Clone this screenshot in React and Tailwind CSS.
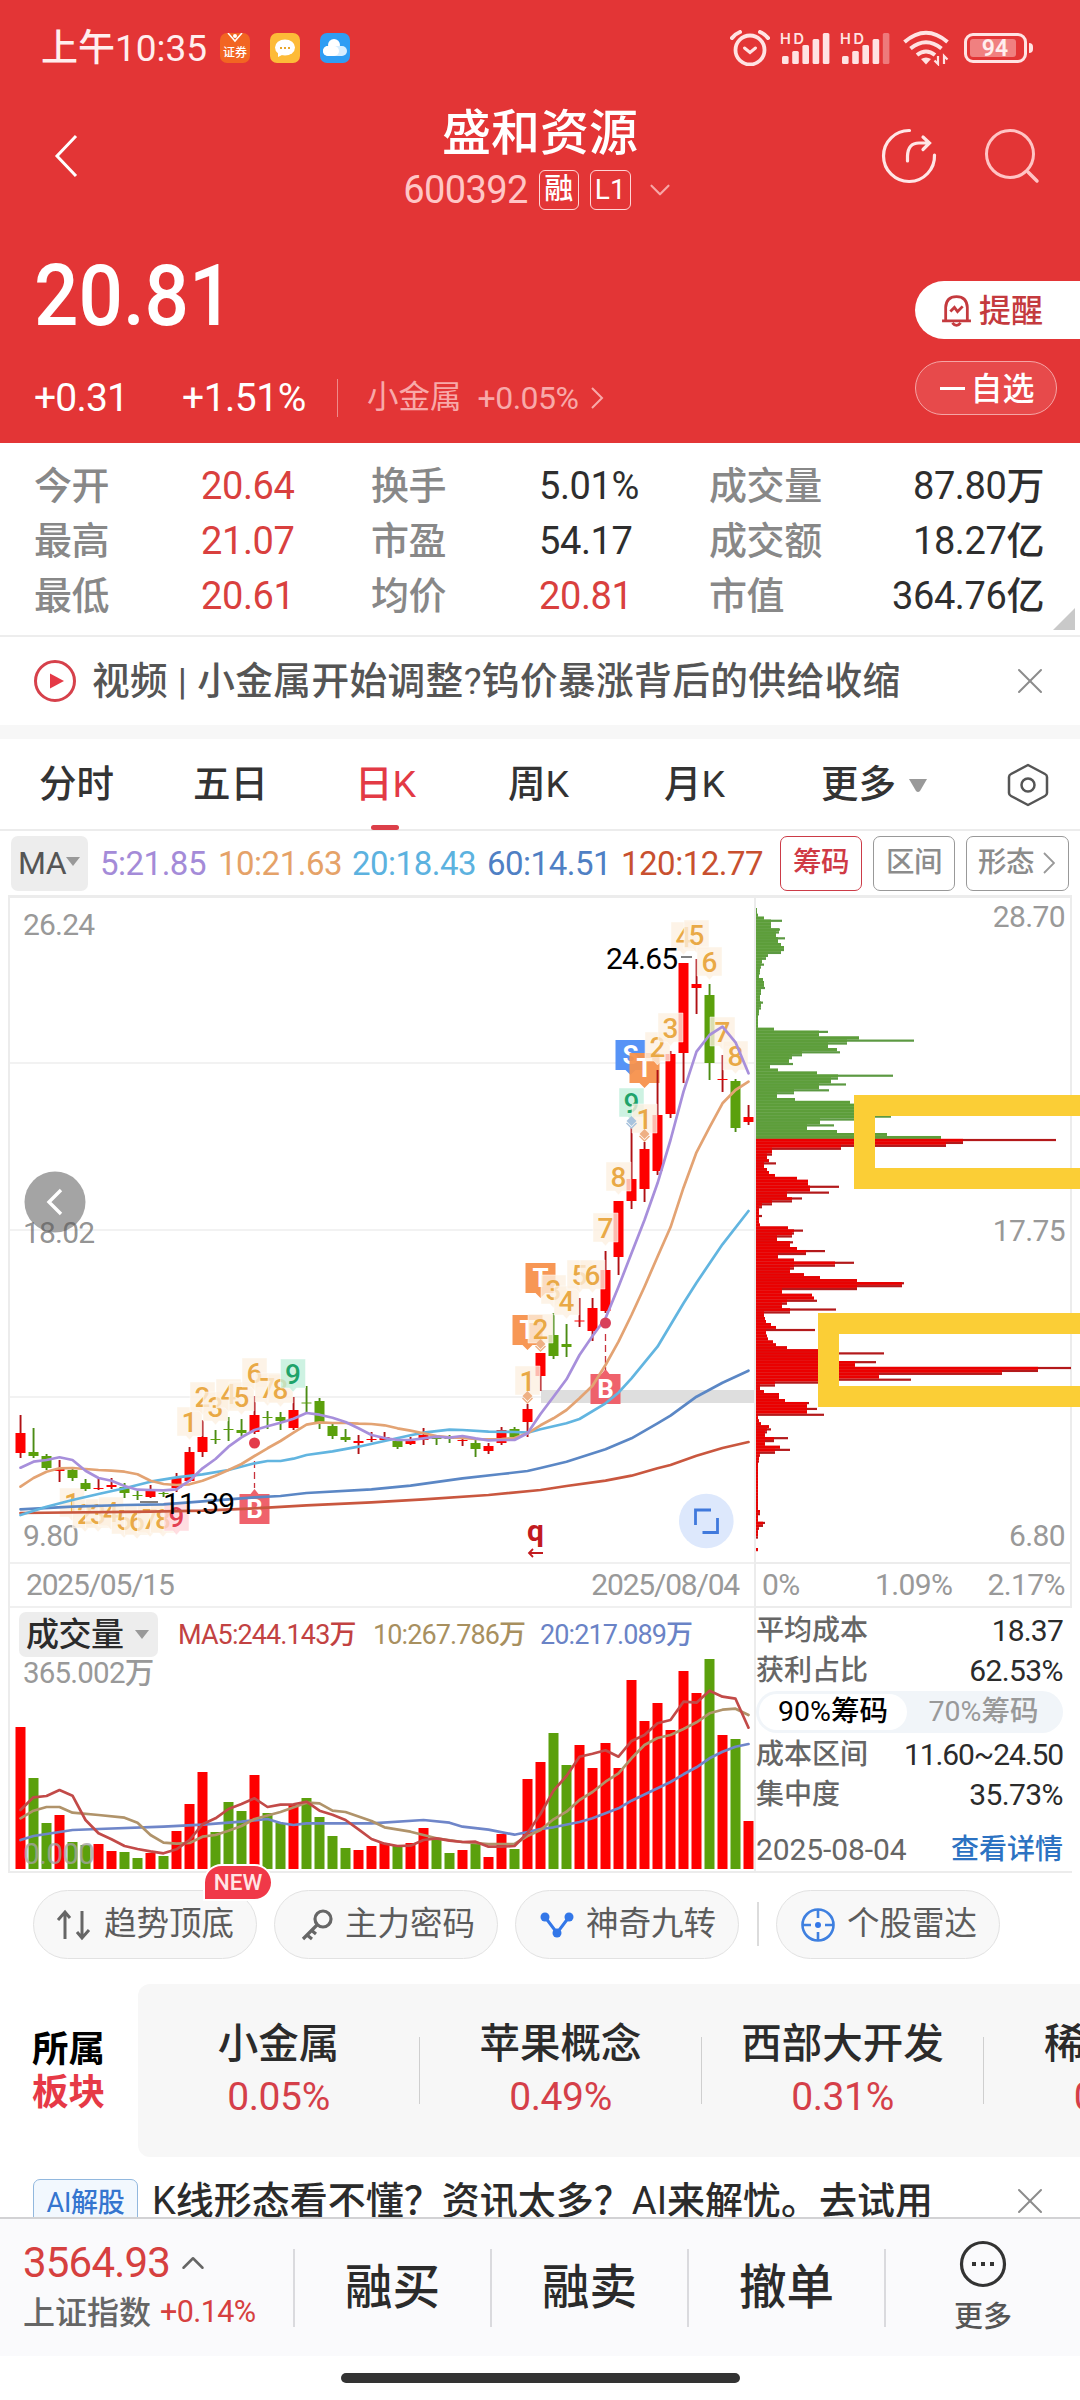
import { ChevronLeft, ChevronRight, ChevronDown, ChevronUp, X } from 'lucide-react';

const UP = '#fe0000';
const DOWN = '#5ba00c';

// [high, bodyTop, bodyBottom, low, direction]
const candles = [
  [1415, 1433, 1453, 1458, 1], [1428, 1452, 1456, 1458, 0], [1454, 1456, 1468, 1470, 0], [1460, 1469, 1471, 1482, 1],
  [1467, 1470, 1478, 1481, 0], [1479, 1483, 1489, 1491, 0], [1477, 1488, 1489, 1490, 1], [1478, 1485, 1487, 1489, 1],
  [1483, 1487, 1493, 1498, 0], [1491, 1495, 1496, 1500, 0], [1485, 1491, 1497, 1498, 1], [1492, 1493, 1494, 1497, 0],
  [1473, 1478, 1488, 1492, 1], [1447, 1452, 1481, 1482, 1], [1420, 1437, 1452, 1457, 1], [1430, 1439, 1440, 1444, 0],
  [1417, 1429, 1430, 1441, 0], [1419, 1430, 1433, 1436, 0], [1396, 1415, 1432, 1434, 1], [1411, 1417, 1418, 1429, 0],
  [1412, 1417, 1421, 1430, 0], [1397, 1410, 1428, 1430, 1], [1386, 1402.5, 1403.5, 1412, 0], [1398, 1401, 1422, 1429, 0],
  [1423, 1426, 1436, 1439, 0], [1429, 1437, 1440, 1442, 0], [1435, 1441, 1443, 1454, 1], [1432, 1439, 1440, 1442, 1],
  [1432, 1437, 1440, 1441, 1], [1438, 1441, 1447, 1449, 0], [1437, 1441, 1444, 1445, 1], [1428, 1435, 1440, 1445, 1],
  [1435, 1438, 1439, 1445, 0], [1435, 1438, 1439, 1443, 0], [1437, 1440, 1441, 1446, 1], [1440, 1443, 1449, 1457, 0],
  [1443, 1446, 1451, 1454, 1], [1427, 1430, 1443, 1445, 1], [1427, 1429, 1437, 1438, 0], [1404, 1409, 1422, 1437, 1],
  [1353, 1353, 1376, 1391, 1], [1313, 1335, 1356, 1359, 0], [1324, 1344, 1347, 1357, 0], [1298, 1320.5, 1321.5, 1327, 1],
  [1298, 1308, 1331, 1341, 1], [1251, 1270, 1311, 1313, 1], [1201, 1201, 1257, 1275, 1], [1128, 1179, 1201, 1209, 1],
  [1142, 1149, 1189, 1202, 1], [1070, 1115, 1171, 1175, 1], [1051, 1054, 1114, 1118, 1], [963, 963, 1053, 1083, 1],
  [959, 984, 988, 1014, 1], [984, 995, 1063, 1080, 0], [1055, 1079, 1080, 1092, 1], [1079, 1081, 1128, 1132, 0],
  [1105, 1117, 1122, 1125, 1],
];

const volumes = [
  142, 91, 46, 54, 27, 24, 25, 18, 17, 11, 16, 13, 38, 65, 97, 37, 67, 58, 94, 56, 46, 64, 71, 52, 33, 21, 19, 23, 26,
  24, 26, 41, 31, 16, 19, 25, 12, 35, 20, 90, 107, 136, 104, 124, 101, 126, 101, 189, 148, 166, 139, 198, 176, 210, 134,
  130, 48,
];

const ma5 = [
  1467.7, 1461.7, 1460, 1457.3, 1460, 1470.7, 1478, 1480.7, 1486, 1489.7, 1490, 1490.3, 1489.3, 1480.7, 1468.3, 1459,
  1446.7, 1437.3, 1430, 1426.3, 1422.7, 1418.7, 1413, 1414.7, 1417.7, 1422, 1428.3, 1435, 1438, 1440, 1440, 1438.3,
  1436.7, 1437.7, 1436, 1438.3, 1440.3, 1440, 1440, 1433.3, 1414, 1396.7, 1379.3, 1355, 1336, 1318.3, 1286.7, 1253.3,
  1220, 1183.3, 1140, 1091.7, 1051.7, 1035, 1026.7, 1042.3, 1073.3,
].map((y, i) => [i, y]);

const ma10 = [
  1486.7, 1478, 1471.7, 1468.3, 1468, 1469, 1470, 1470.7, 1471.7, 1474.3, 1480.7, 1484, 1485, 1484.3, 1480.7, 1475.7,
  1470, 1464, 1456, 1448.3, 1441, 1432.7, 1424.7, 1422.3, 1423, 1423, 1423.7, 1424, 1425.3, 1428.3, 1430.7, 1433.3,
  1436, 1437.3, 1438, 1439, 1439.3, 1439, 1438, 1433.3, 1425.3, 1418.3, 1410, 1398.3, 1385.7, 1365, 1341.7, 1315,
  1286.7, 1256.7, 1227.3, 1187.7, 1152.3, 1127.3, 1103.3, 1090, 1081.7,
].map((y, i) => [i, y]);

const ma20 = [
  [0, 1515], [2, 1506.7], [4, 1500], [6, 1494], [8, 1488.3], [10, 1481.7], [12, 1477.3], [14, 1474.3], [16, 1470],
  [18, 1463.3], [19, 1461], [20, 1461], [21, 1458.7], [22, 1455], [24, 1451.3], [26, 1446.7], [28, 1441], [30, 1435.3],
  [31, 1432.7], [33, 1429.7], [34, 1430], [36, 1431.7], [38, 1432], [39, 1432.7], [40, 1429.3], [42, 1423.3],
  [43, 1419], [45, 1403.3], [46, 1392.7], [47, 1378.3], [49, 1346.7], [50, 1325], [51, 1303.3], [52, 1282.7],
  [54, 1244.3], [56, 1211],
];

const ma60 = [
  [0, 1509.3], [4, 1506.7], [8, 1505], [11, 1504.3], [14, 1501.3], [18, 1497.3], [20, 1496], [22, 1493], [27, 1489.3],
  [30, 1485.7], [34, 1478.3], [37, 1474], [39, 1471], [40, 1468], [42, 1461.7], [45, 1449.3], [47, 1438.3],
  [49, 1423.3], [50, 1415.7], [52, 1396.7], [54, 1382.7], [56, 1370.7],
];

const ma120 = [
  [0, 1513], [10, 1511.7], [14, 1510.7], [18, 1508.3], [22, 1505.3], [27, 1502.3], [31, 1499.3], [36, 1495],
  [40, 1490], [42, 1486], [45, 1480.7], [47, 1475.7], [49, 1468.3], [50, 1465], [52, 1455.7], [54, 1448], [56, 1442],
];

const vol5 = [
  1810, 1797.3, 1796, 1790, 1795.7, 1820, 1833.3, 1839.3, 1846, 1849, 1851.3, 1853.3, 1849.3, 1840, 1824.3, 1818.3,
  1809, 1804, 1798.3, 1807, 1804.7, 1804.3, 1801.7, 1810.7, 1814.7, 1820, 1829.3, 1839, 1843.7, 1846, 1845.7, 1840,
  1838.3, 1840.7, 1842, 1841.7, 1846.7, 1846.7, 1846, 1833, 1814, 1790.7, 1776, 1756.7, 1753.7, 1750.3, 1756.7, 1741,
  1735, 1723.3, 1720, 1701.7, 1702.7, 1690.7, 1696.7, 1698.7, 1727.7,
].map((y, i) => [i, y]);

const vol10 = [
  [0, 1818.3], [1, 1810.7], [2, 1807], [3, 1807], [4, 1812.7], [6, 1815], [8, 1817.7], [9, 1822.7], [10, 1835],
  [11, 1842.7], [12, 1843.7], [13, 1843], [14, 1836.7], [15, 1835], [16, 1830.7], [17, 1826], [18, 1819], [20, 1812],
  [22, 1802.7], [23, 1803.3], [24, 1810.7], [25, 1812], [27, 1821], [28, 1827.3], [30, 1831.7], [32, 1838.3],
  [34, 1842], [36, 1844], [38, 1844], [39, 1836], [40, 1830], [41, 1819.3], [42, 1811.7], [43, 1800], [44, 1792],
  [45, 1781.7], [46, 1773.3], [47, 1758.3], [48, 1745], [49, 1738], [50, 1735], [51, 1729], [52, 1722.3], [53, 1713.3],
  [54, 1709.7], [55, 1708.7], [56, 1715],
];

const vol20 = [
  [0, 1840], [1, 1836], [4, 1830], [6, 1829], [11, 1826.7], [14, 1824.7], [17, 1821.7], [19, 1819], [20, 1823],
  [21, 1825], [22, 1823.3], [27, 1823.3], [31, 1820], [33, 1822.7], [34, 1826.7], [36, 1829.7], [38, 1834.7],
  [39, 1832], [40, 1829], [41, 1827.3], [43, 1822], [44, 1818.3], [46, 1808.3], [47, 1800.7], [49, 1788.3],
  [50, 1782], [51, 1774.3], [52, 1767.3], [53, 1758.3], [54, 1751.7], [55, 1746.7], [56, 1744],
];

// chip distribution, one length per price step, top to bottom
const chips = [
  1, 1, 2, 8, 26, 15, 15, 24, 23, 20, 29, 22, 25, 28, 28, 25, 12, 10, 6, 8, 5, 4, 4, 3, 7, 8, 8, 9, 5, 5, 4, 4, 7, 5, 5,
  3, 3, 2, 2, 2, 2, 18, 72, 63, 103, 158, 91, 72, 81, 84, 46, 36, 33, 37, 14, 22, 61, 137, 82, 75, 90, 63, 73, 38, 21,
  39, 94, 110, 110, 115, 110, 135, 98, 64, 78, 51, 81, 131, 185, 300, 207, 190, 85, 16, 16, 11, 13, 20, 8, 11, 13, 19,
  41, 52, 52, 83, 54, 73, 31, 46, 36, 16, 6, 3, 3, 6, 3, 3, 4, 32, 47, 38, 36, 21, 37, 34, 41, 69, 50, 22, 38, 98, 79,
  38, 34, 48, 64, 101, 148, 146, 101, 26, 56, 58, 61, 31, 26, 80, 34, 8, 9, 10, 15, 20, 59, 10, 11, 12, 17, 20, 31, 65,
  128, 75, 80, 120, 99, 315, 282, 246, 123, 155, 65, 19, 4, 8, 23, 23, 29, 53, 51, 61, 51, 68, 2, 3, 5, 13, 15, 11, 9,
  32, 18, 9, 24, 34, 19, 4, 3, 3, 2, 2, 2, 2, 2, 2, 2, 2, 2, 2, 2, 2, 2, 2, 2, 2, 4, 4, 2, 2, 9, 7, 3, 2, 2, 2, 0, 0, 0, 2,
];
const FIRST_RED_CHIP = 79;

const turns = [
  [72, 1503, '1'], [85, 1514, '2'], [98, 1514, '3'], [111, 1512, '4'], [124, 1520, '5'], [137, 1521, '6'],
  [150, 1519, '7'], [163, 1519, '8'],
  [189.5, 1422, '1'], [202.5, 1397, '2'], [215.5, 1407, '3'], [228.5, 1394, '4'], [241.5, 1397, '5'],
  [254.5, 1373, '6'], [267.5, 1388, '7'], [280.5, 1389, '8'],
  [527.5, 1381, '1'], [540.5, 1329, '2'], [553.5, 1290, '3'], [566.5, 1301, '4'], [579.5, 1275, '5'],
  [592.5, 1275, '6'], [605.5, 1228, '7'], [618.5, 1177, '8'],
  [644.5, 1119, '1'], [657.5, 1047, '2'], [670.5, 1028, '3'], [683.5, 937, '4'], [696.5, 935, '5'],
  [709.5, 962, '6'], [722.5, 1032, '7'], [735.5, 1056, '8'],
];

const stats = [
  ['今开', '20.64', true, '换手', '5.01%', false, '成交量', '87.80万'],
  ['最高', '21.07', true, '市盈', '54.17', false, '成交额', '18.27亿'],
  ['最低', '20.61', true, '均价', '20.81', true, '市值', '364.76亿'],
];

const sectors = [
  ['小金属', '0.05%'],
  ['苹果概念', '0.49%'],
  ['西部大开发', '0.31%'],
  ['稀土永磁', '0.28%'],
];

const barX = (i) => 20.5 + i * 13;
const toPoints = (line) => line.map(([i, y]) => `${barX(i)},${y}`).join(' ');

function Line({ data, color, width = 2.7 }) {
  return <polyline points={toPoints(data)} fill="none" stroke={color} strokeWidth={width} strokeLinejoin="round" strokeLinecap="round" />;
}

function Turn({ x, y, n, bg = '#fdf0e0', color = '#e8a53c' }) {
  return (
    <g>
      <path
        d={`M${x - 12.5} ${y - 15}h25v29h-9l-3.5 4l-3.5-4h-9z`}
        fill={bg}
        fillOpacity="0.78"
        stroke="#fff"
        strokeOpacity="0.6"
        strokeWidth="0.8"
      />
      <text x={x} y={y + 10} fontSize="28" fontWeight="500" fill={color} fillOpacity="0.95" textAnchor="middle">{n}</text>
    </g>
  );
}

function Flag({ x, y, label, color, up }) {
  const d = up
    ? `M${x - 15} ${y - 15}h11l4-5l4 5h11v30h-30z`
    : `M${x - 15} ${y - 15}h30v30h-10l-5 5l-5-5h-10z`;
  return (
    <g>
      <path d={d} fill={color} fillOpacity="0.95" />
      <text x={x} y={y + 9} fontSize="26" fontWeight="700" fill="#fff" textAnchor="middle">{label}</text>
    </g>
  );
}

function Diamond({ x, y, color }) {
  return (
    <g>
      <path d={`M${x - 5} ${y}l5-5l5 5l-5 5z`} fill={color} />
      <path d={`M${x - 5} ${y + 2}l5 5l5-5`} fill="none" stroke={color} strokeWidth="1.5" />
    </g>
  );
}

function KLineChart() {
  return (
    <svg viewBox="10 898 744 664" className="block h-[664px] w-[744px] overflow-visible">
      <g stroke="#f2f2f2" strokeWidth="2">
        <path d="M10 1063H754M10 1230H754M10 1397H754" />
      </g>
      <circle cx="55" cy="1202" r="30.5" fill="#a4a4a4" />
      <path d="M61 1190L49 1202L61 1214" fill="none" stroke="#fff" strokeWidth="3.4" />
      <rect x="541" y="1390" width="213" height="13" fill="#dedede" />
      <g fontSize="30" fill="#999" letterSpacing="-0.8">
        <text x="23" y="935">26.24</text>
        <text x="23" y="1243" fill="#555" fillOpacity="0.65">18.02</text>
        <text x="23" y="1546">9.80</text>
      </g>

      {turns.slice(0, 8).map(([x, y, n]) => <Turn key={`${x}-${y}`} x={x} y={y} n={n} />)}
      <Turn x={176.5} y={1517} n="9" bg="#ffd3d8" color="#e2364a" />

      <Flag x={254.5} y={1509} label="B" color="#ee5a64" up />
      <Flag x={605.5} y={1389} label="B" color="#ee5a64" up />
      <g stroke="#c8323c" strokeWidth="1.3" strokeDasharray="7 4">
        <path d="M254.5 1461V1488M605.5 1334V1370" />
      </g>
      <Flag x={630.5} y={1055} label="S" color="#4d8df6" />
      <Flag x={644.5} y={1068} label="T" color="#f7914c" />
      <Flag x={540.5} y={1278} label="T" color="#f7914c" />
      <Flag x={527.5} y={1330} label="T" color="#f7914c" />

      {candles.map(([high, top, bottom, low, up], i) => (
        <g key={i} fill={up ? UP : DOWN}>
          <rect x={barX(i) - 0.9} y={high} width="1.9" height={low - high} fill={up ? '#b01014' : '#4c8c14'} />
          <rect x={barX(i) - 5} y={top} width="10" height={bottom - top} />
        </g>
      ))}

      {turns.slice(8, 16).map(([x, y, n]) => <Turn key={`${x}-${y}`} x={x} y={y} n={n} />)}
      <Turn x={293} y={1374} n="9" bg="#bfeeda" color="#149e63" />
      {turns.slice(16, 24).map(([x, y, n]) => <Turn key={`${x}-${y}`} x={x} y={y} n={n} />)}
      <Turn x={631.5} y={1103} n="9" bg="#bfeeda" color="#149e63" />
      {turns.slice(24).map(([x, y, n]) => <Turn key={`${x}-${y}`} x={x} y={y} n={n} />)}
      <Diamond x={527.5} y={1396} color="#eeb083" />
      <Diamond x={540.5} y={1344} color="#eeb083" />
      <Diamond x={644.5} y={1134} color="#eeb083" />
      <Diamond x={631.5} y={1121} color="#a9c3dd" />

      <Line data={ma120} color="#c9573f" />
      <Line data={ma60} color="#5b87c5" />
      <Line data={ma20} color="#62b5e0" />
      <Line data={ma10} color="#e3a373" />
      <Line data={ma5} color="#a78fdb" />
      <circle cx="254.5" cy="1443" r="5.5" fill="#e33b4a" />
      <circle cx="605.5" cy="1323" r="5.5" fill="#d8405a" />

      <path d="M140 1502H158M681 957H692" stroke="#555" strokeWidth="1.6" />
      <g fontSize="30" fill="#000" letterSpacing="-0.8">
        <text x="163" y="1514">11.39</text>
        <text x="606" y="969">24.65</text>
      </g>
      <text x="535.5" y="1541" fontSize="30" fontWeight="700" fill="#c21b1f" textAnchor="middle">q</text>
      <path d="M543 1553H529M533 1549L529 1553L533 1557" fill="none" stroke="#c21b1f" strokeWidth="1.8" />

      <circle cx="706.3" cy="1521" r="27.3" fill="#dde8fc" />
      <path d="M695.5 1525V1510H711M717.5 1518V1532.5H702.5" fill="none" stroke="#4079dc" strokeWidth="2.8" />
    </svg>
  );
}

function VolumeChart() {
  return (
    <svg viewBox="10 1659 744 211" className="block h-[211px] w-[744px] overflow-visible">
      <text x="23" y="1683" fontSize="29.5" fill="#999" letterSpacing="-0.8">365.002万</text>
      {volumes.map((h, i) => (
        <rect key={i} x={barX(i) - 5} y={1869 - h} width="10" height={h} fill={candles[i][4] ? UP : DOWN} />
      ))}
      <text x="23" y="1864" fontSize="30" fill="#a3a3a3" fillOpacity="0.8" letterSpacing="-0.8">0.000</text>
      <Line data={vol20} color="#6f86c9" />
      <Line data={vol10} color="#b0936a" />
      <Line data={vol5} color="#c24a48" />
    </svg>
  );
}

function ChipChart() {
  return (
    <svg viewBox="756 898 314 664" className="block h-[664px] w-[314px] overflow-visible">
      {chips.map((len, i) => {
        const y = 908 + i * 2.923;
        const red = i >= FIRST_RED_CHIP;
        const inner = Math.min(len, chips[i + 1] ?? len);
        return (
          <g key={i}>
            <rect x="756" y={y} width={inner} height="3.1" fill={red ? '#f52222' : '#73ad53'} />
            <rect x="756" y={y} width={len} height="2.2" fill={red ? '#b3191b' : '#5c9942'} />
            <rect x="756" y={y} width={inner} height="2.3" fill={red ? '#ea0000' : '#5d9e3a'} />
          </g>
        );
      })}
      <g fontSize="30" fill="#999" textAnchor="end" letterSpacing="-0.6">
        <text x="1065" y="927">28.70</text>
        <text x="1065" y="1241">17.75</text>
        <text x="1065" y="1546">6.80</text>
      </g>
    </svg>
  );
}

function SignalBars({ faded }) {
  return (
    <svg viewBox="0 0 51 34" className="h-[34px] w-[51px] overflow-visible">
      <text x="0" y="12.5" fontSize="14.5" fontWeight="600" fill="#ffe3e3" textLength="24" fontFamily="Inter">HD</text>
      {[8, 13, 19, 25, 31].map((h, i) => (
        <rect key={h} x={2 + i * 10.2} y={33 - h} width="6.6" height={h} rx="1.5" fill="#ffe3e3" fillOpacity={faded && i === 4 ? 0.4 : 1} />
      ))}
    </svg>
  );
}

function StatusBar() {
  return (
    <div className="flex h-[96px] items-center pl-[41px] text-[#ffeeee]">
      <span className="w-[179px] text-[37px] leading-none whitespace-nowrap">上午10:35</span>
      <svg viewBox="0 0 30 30" className="size-[30px]">
        <rect width="30" height="30" rx="7" fill="#f26522" />
        <path d="M8 0L15 8L22 0" fill="none" stroke="#fff" strokeWidth="1.5" />
        <circle cx="15" cy="3" r="2" fill="#fff" />
        <text x="15" y="24" fontSize="12" fill="#fff" textAnchor="middle">证券</text>
      </svg>
      <svg viewBox="0 0 30 30" className="ml-5 size-[30px]">
        <rect width="30" height="30" rx="7" fill="#fdbb38" />
        <ellipse cx="15" cy="14.5" rx="10" ry="8" fill="#fff" />
        <path d="M8 18v6l6-3z" fill="#fff" />
        <path d="M10 15h2M14 15h2M18 15h2" stroke="#e8a52c" strokeWidth="2" />
      </svg>
      <svg viewBox="0 0 30 30" className="ml-5 size-[30px]">
        <rect width="30" height="30" rx="7" fill="#2f9df4" />
        <circle cx="14" cy="12" r="6" fill="#fff" />
        <rect x="3" y="13" width="24" height="10" rx="5" fill="#d8eeff" />
        <rect x="3" y="13" width="16" height="10" rx="5" fill="#fff" />
      </svg>
      <svg viewBox="0 0 40 36" className="ml-[380px] h-[36px] w-[40px]" fill="none" stroke="#ffe3e3" strokeLinecap="round">
        <circle cx="20" cy="20" r="14.5" strokeWidth="3.8" />
        <path d="M14.5 18L20 22.5L25.5 18" strokeWidth="3" />
        <path d="M2 8Q5 4 10 2M38 8Q35 4 30 2" strokeWidth="4" />
      </svg>
      <div className="ml-[10px]"><SignalBars /></div>
      <div className="ml-[9px]"><SignalBars faded /></div>
      <svg viewBox="0 0 47 36" className="ml-[12px] h-[36px] w-[47px]" fill="none" stroke="#ffe3e3" strokeWidth="4">
        <path d="M1.5 12Q23 -6.5 44.5 12M7.5 18.5Q23 6 38.5 18.5M14 25Q23 18 32 25" />
        <path d="M18 29Q23 26 28 29L23 34.5z" fill="#ffe3e3" stroke="none" />
        <path d="M35 26v8l-3.5-3.5M41 34v-8l3.5 3.5" strokeWidth="2.2" />
      </svg>
      <div className="ml-[14px] flex h-[30px] w-[63px] rounded-[9px] border-[3px] border-[#ffe3e3] p-[3px]">
        <div className="flex w-[46px] items-center justify-center rounded-[3px] bg-[#f08080]">
          <span className="pl-[4px] text-[23px] leading-none font-semibold">94</span>
        </div>
      </div>
      <div className="ml-[2px] h-[10px] w-[4px] rounded-r bg-[#ffe3e3]" />
    </div>
  );
}

function Header() {
  return (
    <header className="h-[443px] bg-[#e33536] text-white">
      <StatusBar />
      <div className="flex h-[144px]">
        <svg viewBox="0 0 24 44" className="mt-[38px] ml-[54px] h-[44px] w-[24px]">
          <path d="M22 2L3 22L22 42" fill="none" stroke="#fff" strokeWidth="3" />
        </svg>
        <div className="ml-[322px] flex w-[280px] flex-col items-center">
          <h1 className="mt-[13px] text-[49px] leading-[50px] font-medium">盛和资源</h1>
          <div className="mt-[10px] flex items-center">
            <span className="pt-[2px] text-[38px] leading-[39px] font-normal tracking-[-0.6px] text-[#ffc6c6]">600392</span>
            <span className="ml-[11px] flex h-[40px] w-[40px] items-center justify-center rounded-[6px] border border-[#ffd6d6] text-[29px] leading-none">融</span>
            <span className="ml-[11px] flex h-[40px] w-[41px] items-center justify-center rounded-[6px] border border-[#ffd6d6] text-[28px] leading-none">L1</span>
            <ChevronDown className="ml-[12px] size-[34px] text-[#f7a6a6]" strokeWidth={1.5} />
          </div>
        </div>
        <svg viewBox="0 0 56 56" className="mt-[32px] ml-[201px] size-[56px]" fill="none" stroke="#ffe6e6" strokeWidth="3.2" strokeLinecap="round">
          <path d="M28.5 2.5A25.5 25.5 0 1 0 53.5 27" />
          <path d="M26.5 33V28Q27 15 38 15H48M42 9L48.5 15L42 21.5" />
        </svg>
        <svg viewBox="0 0 56 56" className="mt-[32px] ml-[47px] size-[56px]" fill="none" stroke="#ffc4c4" strokeWidth="3">
          <circle cx="26" cy="26" r="23.5" />
          <path d="M44 44L53 53" strokeWidth="3.5" strokeLinecap="round" />
        </svg>
      </div>
      <div className="flex h-[203px]">
        <div className="flex-1 pl-[34px]">
          <div className="mt-[11px] h-[90px] w-[200px] origin-left scale-x-[0.92] text-[85px] leading-[90px] font-medium">20.81</div>
          <div className="mt-[37px] flex h-[40px] items-center whitespace-nowrap">
            <span className="w-[148px] text-[39px] leading-none tracking-[-0.8px]">+0.31</span>
            <span className="w-[155px] text-[39px] leading-none tracking-[-0.5px]">+1.51%</span>
            <span className="h-[38px] w-px bg-[#ef8a8a]" />
            <span className="ml-[29px] text-[31.5px] leading-none font-normal text-[#f8a9a9]">小金属</span>
            <span className="ml-[16px] text-[32px] leading-none font-normal tracking-[-0.5px] text-[#f8a9a9]">+0.05%</span>
            <svg viewBox="0 0 14 24" className="ml-[11px] h-[24px] w-[14px]"><path d="M2 2L12 12L2 22" fill="none" stroke="#f8a9a9" strokeWidth="2" /></svg>
          </div>
        </div>
        <div className="flex w-[165px] flex-col">
          <div className="mt-[41px] flex h-[58px] items-center rounded-l-full bg-white pl-[25px] text-[#c43a3e]">
            <svg viewBox="0 0 32 32" className="size-[33px]" fill="none" stroke="#c43a3e" strokeWidth="2.7">
              <path d="M2 26H30M5.5 26V13Q6 2.5 16 2.5T26.5 13V26" />
              <path d="M10 17L14 13L17 17L22 12M12 28Q16 33 20 28" />
            </svg>
            <span className="mt-[2px] ml-[6px] text-[32px] leading-none">提醒</span>
          </div>
          <div className="mt-[22px] flex h-[54px] w-[142px] items-center justify-center rounded-full border border-[#f5a5a5] bg-[#e74a4b] pt-px pl-[3px] text-[32px] leading-none">
            <span className="mr-[5px] h-[3px] w-[25px] bg-white" />
            自选
          </div>
        </div>
      </div>
    </header>
  );
}

function Stats() {
  return (
    <section className="flex h-[194px] flex-col border-b-2 border-[#ededed] pt-[15px]">
      {stats.map(([a, av, aUp, b, bv, bUp, c, cv]) => (
        <div key={a} className="flex h-[55px] items-center pl-[34px] text-[38px] leading-none tracking-[-0.4px] whitespace-nowrap text-[#2e2e2e]">
          <span className="w-[167px] text-[#888]">{a}</span>
          <span className={aUp ? 'w-[170px] text-[#d9403e]' : 'w-[170px]'}>{av}</span>
          <span className="w-[168px] text-[#888]">{b}</span>
          <span className={bUp ? 'w-[170px] text-[#d9403e]' : 'w-[170px]'}>{bv}</span>
          <span className="text-[#888]">{c}</span>
          <span className="flex-1 pr-[36px] text-right">{cv}</span>
        </div>
      ))}
      <svg viewBox="0 0 22 22" className="-mt-[15px] mr-[5px] size-[22px] shrink-0 self-end">
        <path d="M22 0V22H0z" fill="#c9c9c9" />
      </svg>
    </section>
  );
}

function News() {
  return (
    <section className="flex h-[88px] items-center pl-[33px]">
      <svg viewBox="0 0 44 44" className="size-[44px]">
        <circle cx="22" cy="22" r="19.5" fill="none" stroke="#d6414b" strokeWidth="3" />
        <path d="M17 14.5L31 22L17 29.5z" fill="#e53946" />
      </svg>
      <span className="mt-[2px] ml-[15px] text-[37.7px] leading-none tracking-[0.38px] whitespace-nowrap text-[#555]">
        视频 | 小金属开始调整?钨价暴涨背后的供给收缩
      </span>
      <X className="mr-[28px] ml-auto size-[44px] text-[#8c8c8c]" strokeWidth={1.1} />
    </section>
  );
}

function Tabs() {
  return (
    <nav className="flex h-[92px] items-center border-b-2 border-[#ececec] pt-[2px] pl-[39px] text-[37.5px] leading-none whitespace-nowrap text-[#333]">
      <span className="w-[154px]">分时</span>
      <span className="w-[162px]">五日</span>
      <span className="relative w-[153px] text-[#e33a45]">
        日K
        <i className="absolute top-[59px] left-[16px] h-[5px] w-[28px] rounded-full bg-[#dc3f49]" />
      </span>
      <span className="w-[156px]">周K</span>
      <span className="w-[157px]">月K</span>
      <span>更多</span>
      <svg viewBox="0 0 20 13" className="ml-[12px] h-[13px] w-[20px]"><path d="M1 0H19L12 12Q10 14 8 12z" fill="#999" /></svg>
      <svg viewBox="0 0 44 44" className="ml-[78px] size-[44px]" fill="none" stroke="#555" strokeWidth="2.5">
        <path d="M22 2L39 11Q41 12 41 14V30Q41 32 39 33L22 42L5 33Q3 32 3 30V14Q3 12 5 11z" strokeLinejoin="round" />
        <circle cx="22" cy="22" r="6.5" />
      </svg>
    </nav>
  );
}

function MaRow() {
  return (
    <div className="flex h-[64px] items-center pl-[11px] text-[33px] leading-none tracking-[-0.5px] whitespace-nowrap">
      <span className="flex h-[55px] w-[77px] items-center rounded-[7px] bg-[#ededed] pl-[7px] text-[#555]">
        <span className="w-[48px] text-[32px]">MA</span>
        <svg viewBox="0 0 14 9" className="mb-1 h-[9px] w-[14px]"><path d="M0 0H14L7 9z" fill="#999" /></svg>
      </span>
      <span className="ml-[12px] w-[118px] text-[#a48bd8]">5:21.85</span>
      <span className="w-[134px] text-[#e5a268]">10:21.63</span>
      <span className="w-[135px] text-[#5cb2df]">20:18.43</span>
      <span className="w-[134px] text-[#4f80c4]">60:14.51</span>
      <span className="w-[159px] text-[#c8502f]">120:12.77</span>
      <span className="flex h-[55px] w-[82px] items-center justify-center rounded-[7px] border-[1.5px] border-[#cc3b47] text-[28.5px] text-[#cf3a45]">筹码</span>
      <span className="ml-[11px] flex h-[55px] w-[82px] items-center justify-center rounded-[7px] border-[1.5px] border-[#999] text-[28.5px] text-[#8c8c8c]">区间</span>
      <span className="ml-[11px] flex h-[55px] w-[103px] items-center rounded-[7px] border-[1.5px] border-[#999] pl-[11px] text-[28.5px] text-[#8c8c8c]">
        形态
        <svg viewBox="0 0 12 22" className="ml-[9px] h-[22px] w-[12px]"><path d="M1 1L11 11L1 21" fill="none" stroke="#999" strokeWidth="1.8" /></svg>
      </span>
    </div>
  );
}

function ChipInfo() {
  return (
    <div className="flex h-[265px] flex-col pr-[9px] text-[28px] leading-none whitespace-nowrap text-[#666]">
      <div className="mt-[3px] flex h-[40px] items-center justify-between">
        平均成本<span className="text-[30px] tracking-[-0.8px] text-[#2b2b2b]">18.37</span>
      </div>
      <div className="flex h-[40px] items-center justify-between">
        获利占比<span className="text-[30px] tracking-[-0.6px] text-[#2b2b2b]">62.53%</span>
      </div>
      <div className="flex h-[42px] items-center rounded-full bg-[#f1f5f9] p-[3px] text-[28.5px]">
        <span className="flex h-full w-[148px] items-center justify-center rounded-full bg-white text-black">90%筹码</span>
        <span className="flex-1 text-center text-[#999]">70%筹码</span>
      </div>
      <div className="mt-[2px] flex h-[40px] items-center justify-between">
        成本区间<span className="text-[30px] tracking-[-1.1px] text-[#2b2b2b]">11.60~24.50</span>
      </div>
      <div className="flex h-[40px] items-center justify-between">
        集中度<span className="text-[30px] tracking-[-0.6px] text-[#2b2b2b]">35.73%</span>
      </div>
      <div className="mt-[15px] flex h-[40px] items-center justify-between">
        <span className="text-[30px] tracking-[-0.1px]">2025-08-04</span>
        <span className="text-[#2c72c2]">查看详情</span>
      </div>
    </div>
  );
}

function Charts() {
  return (
    <section className="relative flex h-[978px] pl-[8px]">
      <div className="w-[748px] border-t-[3px] border-r-2 border-b-2 border-l-2 border-[#ececec]">
        <KLineChart />
        <div className="flex h-[46px] items-center justify-between border-y-2 border-[#f0f0f0] pr-[15px] pl-[16px] text-[30px] leading-none tracking-[-1.2px] text-[#999]">
          <span>2025/05/15</span>
          <span>2025/08/04</span>
        </div>
        <div className="flex h-[51px] items-center pt-[2px] pl-[9px] text-[27px] leading-none tracking-[-0.9px] whitespace-nowrap">
          <span className="flex h-[45px] w-[139px] items-center rounded-[7px] bg-[#ededed] pl-[7px] text-[33px] tracking-[-0.5px] text-[#2b2b2b]">
            成交量
            <svg viewBox="0 0 14 9" className="ml-[11px] h-[9px] w-[14px]"><path d="M0 0H14L7 9z" fill="#999" /></svg>
          </span>
          <span className="mt-[2px] ml-[20px] w-[195px] text-[#c24242]">MA5:244.143万</span>
          <span className="mt-[2px] w-[167px] text-[#a8905f]">10:267.786万</span>
          <span className="mt-[2px] text-[#6a83c6]">20:217.089万</span>
        </div>
        <VolumeChart />
      </div>
      <div className="w-[316px] border-t-[3px] border-b-2 border-[#ececec]">
        <div className="border-r-2 border-b-2 border-[#ececec]">
          <ChipChart />
          <div className="flex h-[44px] items-center border-t-2 border-[#ececec] pr-[5px] pl-[6px] text-[30px] leading-none tracking-[-0.6px] text-[#999]">
            <span className="w-[113px]">0%</span>
            <span className="flex-1">1.09%</span>
            <span>2.17%</span>
          </div>
        </div>
        <ChipInfo />
      </div>
      <div className="absolute top-[200px] right-0 h-[94px] w-[226px] border-y-[21px] border-l-[21px] border-[#fbce36]" />
      <div className="absolute top-[418px] right-0 h-[94px] w-[262px] border-y-[21px] border-l-[21px] border-[#fbce36]" />
    </section>
  );
}

function Pill({ children, label, className = '' }) {
  return (
    <div className={`relative flex h-[69px] w-[224px] items-center rounded-full border border-[#e2e2e2] bg-[#f8f8f8] pl-[22px] text-[32.5px] leading-none font-normal whitespace-nowrap text-[#5c5c5c] ${className}`}>
      {children}
      <span className="ml-[10px]">{label}</span>
    </div>
  );
}

function Tools() {
  return (
    <section className="flex h-[111px] items-start pt-[17px] pl-[33px]">
      <Pill label="趋势顶底">
        <svg viewBox="0 0 38 34" className="h-[34px] w-[38px]" fill="none" stroke="#666" strokeWidth="3">
          <path d="M9 31V5M2 12L9 4L14 10M26 3V29M33 22L26 30L21 24" />
        </svg>
        <span className="absolute -top-[27px] left-[169px] flex h-[37px] w-[70px] items-center justify-center rounded-full rounded-bl-[4px] border-2 border-white bg-[#f03848] text-[22.5px] font-medium text-[#ffe5e5]">NEW</span>
      </Pill>
      <Pill label="主力密码" className="ml-[17px]">
        <svg viewBox="0 0 38 34" className="h-[34px] w-[38px]" fill="none" stroke="#666" strokeWidth="3.2">
          <circle cx="26" cy="11" r="8" />
          <path d="M20 17L6 31M10 27L15 31M14 22L19 26" />
        </svg>
      </Pill>
      <Pill label="神奇九转" className="ml-[17px]">
        <svg viewBox="0 0 38 34" className="h-[34px] w-[38px]" fill="none" stroke="#3377e8" strokeWidth="3">
          <path d="M7 9L19 25L31 9" />
          <circle cx="7" cy="9" r="4.5" fill="#3377e8" stroke="none" />
          <circle cx="31" cy="9" r="4.5" fill="#3377e8" stroke="none" />
          <circle cx="19" cy="25" r="4.5" fill="#3377e8" stroke="none" />
        </svg>
      </Pill>
      <span className="mt-[12px] ml-[18px] h-[44px] w-[2px] bg-[#dcdcdc]" />
      <Pill label="个股雷达" className="ml-[17px]">
        <svg viewBox="0 0 38 36" className="h-[36px] w-[38px]" fill="none" stroke="#3f80e0" strokeWidth="2.6">
          <circle cx="19" cy="18" r="15.5" />
          <path d="M19 2V11M19 25V34M3 18H12M26 18H35" />
          <circle cx="19" cy="18" r="3" fill="#3377e8" stroke="none" />
        </svg>
      </Pill>
    </section>
  );
}

function Sectors() {
  return (
    <section className="flex h-[173px] overflow-hidden pl-[32px]">
      <div className="flex w-[106px] flex-col justify-center text-[36.5px] leading-[43px] font-bold">
        <span className="text-black">所属</span>
        <span className="text-[#e63946]">板块</span>
      </div>
      <div className="flex w-[942px] overflow-hidden rounded-l-[12px] bg-[#f7f7f7]">
        {sectors.map(([name, pct], i) => (
          <div key={name} className="flex w-[282px] shrink-0 items-center">
            <div className="flex flex-1 flex-col items-center whitespace-nowrap">
              <span className="text-[40.5px] leading-[52px]  text-[#2b2b2b]">{name}</span>
              <span className="text-[39px] leading-[54px] tracking-[-0.4px] text-[#d53f49]">{pct}</span>
            </div>
            {i < 3 && <span className="h-[67px] w-px bg-[#cfcfcf]" />}
          </div>
        ))}
      </div>
    </section>
  );
}

function AiBanner() {
  return (
    <section className="flex h-[60px] items-start overflow-hidden pt-[22px] pl-[33px] whitespace-nowrap">
      <span className="flex h-[60px] w-[105px] items-start justify-center rounded-[7px] border-[1.5px] border-[#92b8de] bg-[#f2f8fe] pt-[10px] text-[27px] leading-none tracking-[-0.3px] text-[#3575cf]">AI解股</span>
      <span className="ml-[14px] text-[38px] leading-[44px] text-[#2b2b2b]">K线形态看不懂？资讯太多？AI来解忧。去试用</span>
      <X className="mr-[28px] ml-auto size-[44px] text-[#8c8c8c]" strokeWidth={1.1} />
    </section>
  );
}

function BottomBar() {
  return (
    <footer>
      <div className="flex h-[139px] items-center border-t-2 border-[#d2d2d4] bg-[#fafafc] pl-[23px]">
        <div className="w-[270px] pb-[3px] whitespace-nowrap">
          <div className="flex h-[46px] items-center text-[42px] leading-none tracking-[-0.8px] text-[#d6403f]">
            3564.93
            <ChevronUp className="ml-[4px] size-[38px] text-[#666]" strokeWidth={1.6} />
          </div>
          <div className="mt-[7px] flex h-[40px] items-center">
            <span className="text-[32px] leading-none text-[#666]">上证指数</span>
            <span className="ml-[9px] text-[30.5px] leading-none tracking-[-0.6px] text-[#d6403f]">+0.14%</span>
          </div>
        </div>
        {['融买', '融卖', '撤单'].map((label) => (
          <div key={label} className="flex h-[78px] w-[197px] items-center justify-center border-l-2 border-[#dadade] pt-[2px] text-[47.5px] leading-none text-[#2b2b2b]">
            {label}
          </div>
        ))}
        <div className="flex h-[78px] flex-1 flex-col items-center justify-center border-l-2 border-[#dadade]">
          <svg viewBox="0 0 48 48" className="-mt-[4px] size-[48px] shrink-0">
            <circle cx="24" cy="24" r="21.5" fill="none" stroke="#333" strokeWidth="3.2" />
            <path d="M13 24h4M22 24h4M31 24h4" stroke="#333" strokeWidth="4" />
          </svg>
          <span className="mt-[15px] text-[29px] leading-none text-[#555]">更多</span>
        </div>
      </div>
      <div className="flex h-[44px] justify-center pt-[17px]">
        <div className="h-[10px] w-[399px] rounded-full bg-[#333]" />
      </div>
    </footer>
  );
}

export default function App() {
  return (
    <div className="h-[2400px] w-[1080px] overflow-hidden bg-white font-['Roboto','Noto_Sans_CJK_SC',sans-serif] font-[450]">
      <Header />
      <Stats />
      <News />
      <div className="h-[14px] bg-[#f7f7f7]" />
      <Tabs />
      <MaRow />
      <Charts />
      <Tools />
      <Sectors />
      <AiBanner />
      <BottomBar />
    </div>
  );
}
